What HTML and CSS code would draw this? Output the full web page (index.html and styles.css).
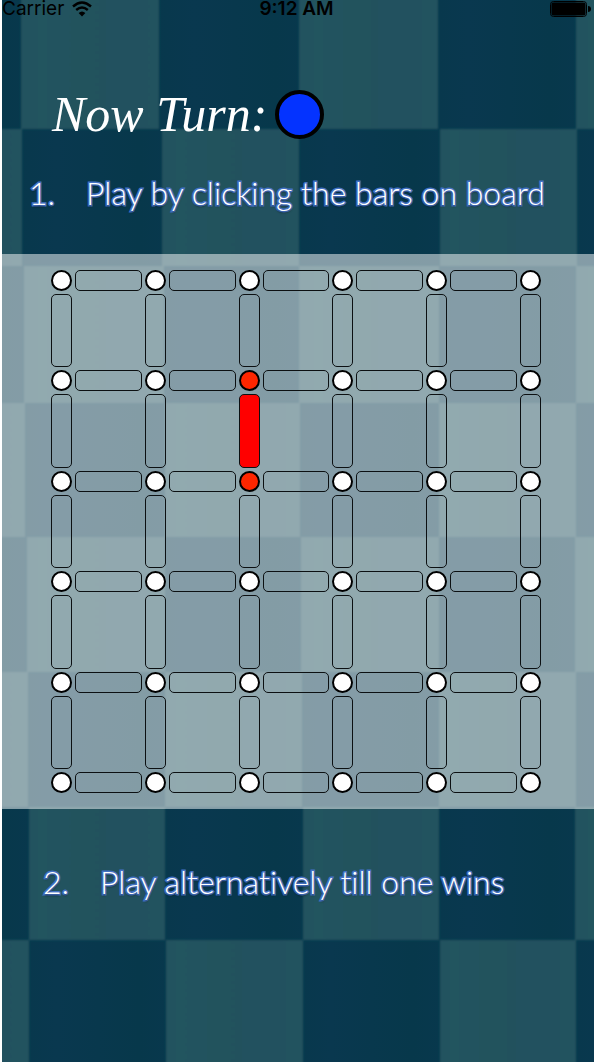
FILE: index.html
```html
<!DOCTYPE html>
<html lang="en">
<head>
<meta charset="utf-8">
<meta name="viewport" content="width=device-width">
<title>Dots and Bars</title>
<link rel="stylesheet" href="styles.css">
</head>
<body>
<div class="screen">
  <svg class="backdrop" viewBox="0 0 592 1062" preserveAspectRatio="none" aria-hidden="true">
    <defs>
      <linearGradient id="light" gradientUnits="userSpaceOnUse" x1="0" y1="0" x2="137" y2="0" spreadMethod="repeat">
        <stop offset="0" stop-color="#20515f"/><stop offset=".3" stop-color="#24545f"/><stop offset=".6" stop-color="#21525d"/><stop offset="1" stop-color="#20515f"/>
      </linearGradient>
      <linearGradient id="dark" gradientUnits="userSpaceOnUse" x1="0" y1="0" x2="137" y2="0" spreadMethod="repeat">
        <stop offset="0" stop-color="#07384b"/><stop offset=".4" stop-color="#09384f"/><stop offset="1" stop-color="#07384b"/>
      </linearGradient>
      <filter id="soften" x="0" y="0" width="1" height="1"><feGaussianBlur stdDeviation="1"/></filter>
    </defs>
    <rect width="592" height="1062" fill="url(#dark)"/>
    <g fill="url(#light)" filter="url(#soften)">
      <path d="M19 -5H157V129H19zM297 -5H436V129H297zM574 -5H600V129H574z"/>
      <path d="M-5 129H20V266H-5zM160 129H297V266H160zM438 129H575V266H438z"/>
      <path d="M22 266H162V403H22zM297 266H437V403H297zM574 266H600V403H574z"/>
      <path d="M-5 403H23V537H-5zM163 403H298V537H163zM437 403H574V537H437z"/>
      <path d="M25 537H163V672H25zM299 537H437V672H299zM573 537H600V672H573z"/>
      <path d="M-5 672H26V807H-5zM163 672H300V807H163zM437 672H574V807H437z"/>
      <path d="M27 807H163V940H27zM301 807H437V940H301zM573 807H600V940H573z"/>
      <path d="M-5 940H27V1070H-5zM164 940H301V1070H164zM438 940H574V1070H438z"/>
    </g>
  </svg>

  <header class="status">
    <div class="status-left">
      <span>Carrier</span>
      <svg class="wifi" viewBox="0 0 20 16" aria-label="Wi-Fi" role="img">
        <path d="M1 5.5Q10 -2.5 19 5.5M4.200 9Q10 4 15.800 9" fill="none" stroke="#000" stroke-width="2.400"/>
        <path d="M6.600 12Q10 9 13.400 12L10 15.500z"/>
      </svg>
    </div>
    <time class="clock">9:12 AM</time>
    <svg class="battery" viewBox="0 0 41 16" aria-label="Battery full" role="img">
      <rect x=".5" y=".5" width="36" height="15" rx="3" fill="none" stroke="#000"/>
      <rect x="1.500" y="1.500" width="34" height="13" rx="2"/>
      <path d="M38 5Q41 5 41 8T38 11z"/>
    </svg>
  </header>

  <main class="game">
    <section class="turn">
      <h1 class="turn-label">Now Turn:</h1>
      <span class="player" role="img" aria-label="Blue"></span>
    </section>
    <p class="rule rule-first"><span>1.</span><span>Play by clicking the bars on board</span></p>
    <section class="board" aria-label="Board">
      <div class="grid" id="grid"></div>
    </section>
    <p class="rule rule-second"><span>2.</span><span>Play alternatively till one wins</span></p>
  </main>
</div>
<script src="board.js"></script>
</body>
</html>
```

FILE: styles.css
```css
* { box-sizing: border-box; }

body {
  margin: 0;
  background: #fff;
  font-family: Inter, "Liberation Sans", sans-serif;
}

.screen {
  position: relative;
  isolation: isolate;
  min-height: 100vh;
  margin-left: 2px;
}

.backdrop {
  position: absolute;
  inset: 0;
  z-index: -1;
  width: 100%;
  height: 100%;
}

.status {
  display: grid;
  grid-template-columns: 1fr auto 1fr;
  align-items: center;
  height: 18px;
  padding: 0 3px 0 0;
  font-size: 19px;
  line-height: 18px;
  color: #000;
}

.status-left {
  display: flex;
  align-items: center;
  gap: 8px;
}

.wifi { width: 20px; height: 16px; }
.clock { font-weight: 600; }
.battery { width: 41px; height: 16px; justify-self: end; }

.turn {
  display: flex;
  align-items: center;
  gap: 8px;
  padding: 71px 0 0 50px;
}

.turn-label {
  margin: 0;
  font: italic 400 50px/50px "Snell Roundhand", "Liberation Serif", serif;
  color: #fff;
}

.player {
  width: 49px;
  height: 49px;
  border: 4px solid #000;
  border-radius: 50%;
  background: #0433ff;
}

.rule {
  display: grid;
  grid-template-columns: 57px 1fr;
  margin: 0;
  font: 400 32px/40px Lato, "Open Sans", sans-serif;
  font-weight: 300;
  font-variant-ligatures: none;
  color: #fff;
  white-space: nowrap;
  -webkit-text-stroke: 3px #4472c4;
  paint-order: stroke fill;
  text-shadow: 0 2px 2px rgba(0, 0, 0, 0.4);
}

.rule-first { padding: 34px 0 41px 27px; }
.rule-second { padding: 53px 0 0 41px; }

.board {
  padding: 16px 53px 16px 49px;
  background: rgba(255, 255, 255, 0.5);
}

.grid {
  display: grid;
  grid-template-columns: repeat(5, 21px 1fr) 21px;
  grid-template-rows: repeat(5, 21px 1fr) 21px;
  gap: 3px;
  aspect-ratio: 490 / 523;
}

.dot {
  border: 2px solid #000;
  border-radius: 50%;
  background: #fff;
}

.dot-red { background: #ff2600; }

.bar {
  min-width: 0;
  margin: 0;
  padding: 0;
  border: 1px solid #0c1012;
  border-radius: 5px;
  background: none;
  cursor: pointer;
}

.bar-red { background: #f00; }
```

FILE: board.js
```js
const grid = document.getElementById("grid");
const SIZE = 11;
const redDots = ["2,4", "4,4"];
const redBars = ["3,4"];

for (let row = 0; row < SIZE; row++) {
  for (let col = 0; col < SIZE; col++) {
    const key = row + "," + col;
    const isDot = row % 2 === 0 && col % 2 === 0;
    const isCell = row % 2 === 1 && col % 2 === 1;
    const item = document.createElement(isDot || isCell ? "span" : "button");
    if (isDot) {
      item.className = redDots.includes(key) ? "dot dot-red" : "dot";
    } else if (!isCell) {
      item.type = "button";
      item.className = redBars.includes(key) ? "bar bar-red" : "bar";
      item.setAttribute("aria-label", "Bar " + (row + 1) + ", " + (col + 1));
      item.addEventListener("click", () => item.classList.add("bar-red"));
    }
    grid.append(item);
  }
}
```
